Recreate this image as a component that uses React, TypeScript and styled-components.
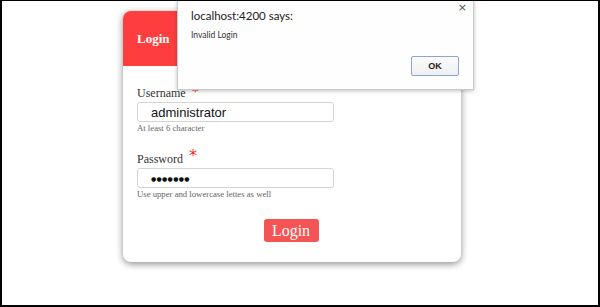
import React from "react";
import styled, { createGlobalStyle } from "styled-components";

const Global = createGlobalStyle`
  html, body { margin: 0; padding: 0; background: #fff; }
  * { box-sizing: border-box; }
`;

const Frame = styled.div`
  position: relative;
  width: 600px;
  height: 307px;
  border-style: solid;
  border-color: #000;
  border-width: 1px 2px 2px 2px;
  overflow: hidden;
  background: #fff;
  padding: 10px 0 0 121px;
`;

const Card = styled.div`
  width: 338px;
  height: 251px;
  border-radius: 8px;
  background: #fff;
  box-shadow: 0 2px 7px rgba(0, 0, 0, 0.45);
  overflow: hidden;
  display: flex;
  flex-direction: column;
`;

const Header = styled.div`
  height: 55px;
  background: #fe3e3e;
  display: flex;
  align-items: center;
  padding-left: 14px;
  color: #fff;
  font-family: "Liberation Serif", serif;
  font-weight: bold;
  font-size: 13px;
`;

const Body = styled.div`
  padding: 20px 14px 0 14px;
  display: flex;
  flex-direction: column;
`;

const Field = styled.div<{ $gap?: number }>`
  display: flex;
  flex-direction: column;
  margin-bottom: ${(p) => p.$gap ?? 0}px;
`;

const Label = styled.div`
  font-family: "Liberation Serif", serif;
  font-size: 12px;
  color: #333;
  height: 16px;
  display: flex;
  align-items: flex-start;
`;

const Star = styled.span<{ $size: number; $top: number }>`
  color: #e8302f;
  font-family: "DejaVu Sans", sans-serif;
  font-size: ${(p) => p.$size}px;
  line-height: 1;
  margin-left: 6px;
  margin-top: ${(p) => p.$top}px;
`;

const Input = styled.div`
  width: 197px;
  height: 20px;
  border: 1px solid #d4d4d4;
  border-radius: 3px;
  display: flex;
  align-items: center;
  padding-left: 13px;
  font-family: "Liberation Sans", Arial, sans-serif;
  font-size: 13px;
  color: #111;
`;

const Dots = styled.span`
  font-family: "DejaVu Sans", sans-serif;
  font-size: 6px;
  letter-spacing: 0.3px;
  color: #111;
`;

const Help = styled.div`
  font-family: "Liberation Serif", serif;
  font-size: 8.7px;
  color: #666;
  margin-top: 1px;
`;

const ButtonRow = styled.div`
  display: flex;
  justify-content: center;
  margin-top: 20px;
`;

const LoginButton = styled.div`
  width: 55px;
  height: 23px;
  background: #f45454;
  border-radius: 3px;
  color: #fff;
  font-family: "Liberation Serif", serif;
  font-size: 16px;
  display: flex;
  align-items: center;
  justify-content: center;
  margin-right: 2px;
`;

const Dialog = styled.div`
  position: absolute;
  left: 175px;
  top: -1px;
  width: 297px;
  height: 90px;
  background: #fefefe;
  border: 1px solid #c9c9c9;
  box-shadow: 0 1px 4px rgba(0, 0, 0, 0.25);
  padding: 6px 14px 0 13px;
  font-family: "Lato", "Open Sans", sans-serif;
`;

const Title = styled.div`
  font-size: 11.5px;
  line-height: 18px;
  color: #222;
  height: 18px;
`;

const Message = styled.div`
  font-size: 8.5px;
  line-height: 11px;
  color: #333;
  margin-top: 5px;
`;

const Close = styled.div`
  position: absolute;
  right: 6px;
  top: 0px;
  font-family: "DejaVu Sans", sans-serif;
  font-size: 11px;
  color: #555;
`;

const DialogActions = styled.div`
  display: flex;
  justify-content: flex-end;
  margin-top: 15px;
`;

const OkButton = styled.div`
  width: 48px;
  height: 20px;
  border: 1px solid #8aa6d3;
  border-radius: 2px;
  background: linear-gradient(#fbfbfb, #efefef);
  display: flex;
  align-items: center;
  justify-content: center;
  font-family: "Liberation Sans", Arial, sans-serif;
  font-weight: bold;
  font-size: 9px;
  color: #222;
`;

export default function App() {
  return (
    <>
      <Global />
      <Frame>
        <Card>
          <Header>Login</Header>
          <Body>
            <Field $gap={19}>
              <Label>
                Username<Star $size={14} $top={-2}>*</Star>
              </Label>
              <Input>administrator</Input>
              <Help>At least 6 character</Help>
            </Field>
            <Field>
              <Label>
                Password<Star $size={16} $top={-4}>*</Star>
              </Label>
              <Input>
                <Dots>●●●●●●●</Dots>
              </Input>
              <Help>Use upper and lowercase lettes as well</Help>
            </Field>
            <ButtonRow>
              <LoginButton>Login</LoginButton>
            </ButtonRow>
          </Body>
        </Card>
        <Dialog>
          <Close>×</Close>
          <Title>localhost:4200 says:</Title>
          <Message>Invalid Login</Message>
          <DialogActions>
            <OkButton>OK</OkButton>
          </DialogActions>
        </Dialog>
      </Frame>
    </>
  );
}
